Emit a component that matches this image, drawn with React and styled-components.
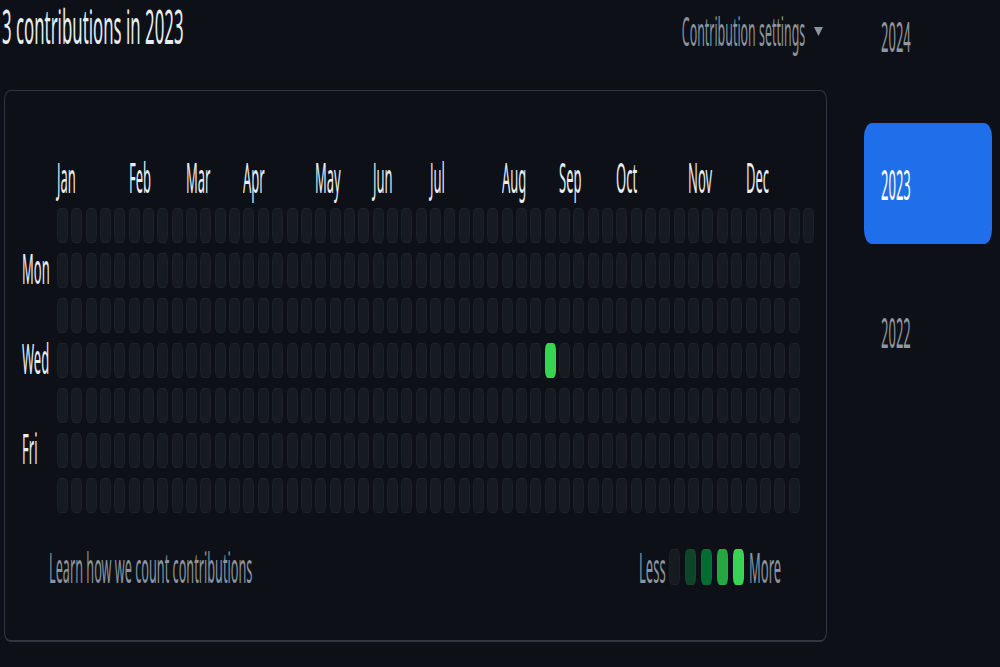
import React from 'react';
import styled, { createGlobalStyle } from 'styled-components';

const GlobalStyle = createGlobalStyle`
  html, body {
    margin: 0;
    padding: 0;
    background: #0d1117;
    overflow: hidden;
  }
  body {
    font-family: "Noto Sans", "Liberation Sans", sans-serif;
    color: #e6edf3;
  }
`;

// text in the shot is drawn very narrow, so every label is squeezed sideways
const Squeezed = styled.span`
  display: inline-block;
  white-space: nowrap;
  transform: scaleX(${p => p.$sx || 0.31});
  transform-origin: ${p => p.$origin || 'left'} center;
`;

const Page = styled.div`
  display: flex;
  align-items: flex-start;
  width: 1000px;
  height: 667px;
`;

const Main = styled.div`
  width: 828px;
  flex-shrink: 0;
`;

const Header = styled.div`
  display: flex;
  justify-content: space-between;
  align-items: flex-start;
  height: 90px;
`;

const Title = styled.h2`
  margin: 0 0 0 2px;
  font-size: 48px;
  font-weight: 400;
  line-height: 52px;
  color: #e6edf3;
`;

const SettingsButton = styled.div`
  display: flex;
  align-items: center;
  gap: 9px;
  margin: 4px 5px 0 0;
  font-size: 40px;
  line-height: 54px;
  color: #8b949e;
`;

const SettingsText = styled.span`
  display: flex;
  justify-content: flex-end;
  width: 126px;
`;

const Card = styled.div`
  margin-left: 4px;
  width: 823px;
  box-sizing: border-box;
  border: 1px solid #30363d;
  border-bottom-width: 2px;
  border-radius: 6px / 10px;
  padding: 66px 0 55px;
`;

const CalendarRow = styled.div`
  display: flex;
`;

const DayColumn = styled.div`
  width: 52px;
  box-sizing: border-box;
  padding: 48px 0 0 17px;
  display: grid;
  grid-template-rows: repeat(7, 35px);
  row-gap: 10px;
`;

const DayLabel = styled.div`
  grid-row: ${p => p.$row + 1};
  font-size: 42px;
  line-height: 35px;
  color: #e6edf3;
`;

const Graph = styled.div`
  display: flex;
  flex-direction: column;
  gap: 11px;
`;

const MonthRow = styled.div`
  display: grid;
  grid-template-columns: repeat(53, 11px);
  column-gap: 3.35px;
  height: 40px;
`;

const MonthLabel = styled.div`
  grid-column: ${p => p.$col + 1} / span 3;
  grid-row: 1;
  font-size: 42px;
  line-height: 40px;
  color: #e6edf3;
`;

const CellGrid = styled.div`
  display: grid;
  grid-auto-flow: column;
  grid-template-rows: repeat(7, 35px);
  grid-auto-columns: 11px;
  column-gap: 3.35px;
  row-gap: 10px;
`;

const levels = ['#161b22', '#0e4429', '#006d32', '#26a641', '#39d353'];

const Cell = styled.div`
  flex-shrink: 0;
  width: 11px;
  height: ${p => p.$h || 35}px;
  border-radius: 3px / 8px;
  background: ${p => levels[p.$level || 0]};
  box-shadow: inset 0 0 0 1px rgba(255, 255, 255, 0.03);
`;

const Footer = styled.div`
  display: flex;
  justify-content: space-between;
  align-items: center;
  height: 36px;
  margin-top: 36px;
  padding: 0 45px 0 44px;
`;

const LearnLink = styled.a`
  display: block;
  width: 210px;
  font-size: 42px;
  line-height: 36px;
  color: #8b949e;
  text-decoration: none;
`;

const Legend = styled.div`
  display: flex;
  align-items: center;
  gap: 5px;
`;

const LegendText = styled.span`
  display: inline-block;
  flex-shrink: 0;
  width: ${p => p.$w}px;
  font-size: 42px;
  line-height: 36px;
  color: #8b949e;
`;

const Sidebar = styled.nav`
  width: 128px;
  margin: -25px 0 0 36px;
  display: flex;
  flex-direction: column;
  gap: 27px;
`;

const YearTab = styled.a`
  display: block;
  height: 121px;
  box-sizing: border-box;
  padding-left: 17px;
  border-radius: 8px / 14px;
  font-size: 42px;
  line-height: 121px;
  background: ${p => (p.$active ? '#1f6feb' : 'transparent')};
  color: ${p => (p.$active ? '#ffffff' : '#9198a1')};
`;

const months = [
  ['Jan', 0], ['Feb', 5], ['Mar', 9], ['Apr', 13], ['May', 18], ['Jun', 22],
  ['Jul', 26], ['Aug', 31], ['Sep', 35], ['Oct', 39], ['Nov', 44], ['Dec', 48],
];

const days = [
  ['Mon', 1], ['Wed', 3], ['Fri', 5],
];

// 2023 starts on a Sunday: 365 days = 52 full weeks + one Sunday
const activity = { 241: 4 };

export default function App() {
  const cells = [];
  for (let i = 0; i < 365; i++) {
    cells.push(<Cell key={i} $level={activity[i] || 0} />);
  }

  return (
    <Page>
      <GlobalStyle />
      <Main>
        <Header>
          <Title>
            <Squeezed $sx={0.35}>3 contributions in 2023</Squeezed>
          </Title>
          <SettingsButton>
            <SettingsText>
              <Squeezed $origin="right">Contribution settings</Squeezed>
            </SettingsText>
            <svg width="9" height="10" viewBox="0 0 9 10">
              <polygon points="0,1 9,1 4.5,10" fill="#8b949e" />
            </svg>
          </SettingsButton>
        </Header>
        <Card>
          <CalendarRow>
            <DayColumn>
              {days.map(([d, r]) => (
                <DayLabel key={d} $row={r}>
                  <Squeezed>{d}</Squeezed>
                </DayLabel>
              ))}
            </DayColumn>
            <Graph>
              <MonthRow>
                {months.map(([m, c]) => (
                  <MonthLabel key={m} $col={c}>
                    <Squeezed>{m}</Squeezed>
                  </MonthLabel>
                ))}
              </MonthRow>
              <CellGrid>{cells}</CellGrid>
            </Graph>
          </CalendarRow>
          <Footer>
            <LearnLink href="#">
              <Squeezed $sx={0.302}>Learn how we count contributions</Squeezed>
            </LearnLink>
            <Legend>
              <LegendText $w={25}>
                <Squeezed>Less</Squeezed>
              </LegendText>
              {levels.map((c, i) => (
                <Cell key={c} $level={i} $h={36} />
              ))}
              <LegendText $w={32}>
                <Squeezed>More</Squeezed>
              </LegendText>
            </Legend>
          </Footer>
        </Card>
      </Main>
      <Sidebar>
        <YearTab>
          <Squeezed>2024</Squeezed>
        </YearTab>
        <YearTab $active>
          <Squeezed>2023</Squeezed>
        </YearTab>
        <YearTab>
          <Squeezed>2022</Squeezed>
        </YearTab>
      </Sidebar>
    </Page>
  );
}
